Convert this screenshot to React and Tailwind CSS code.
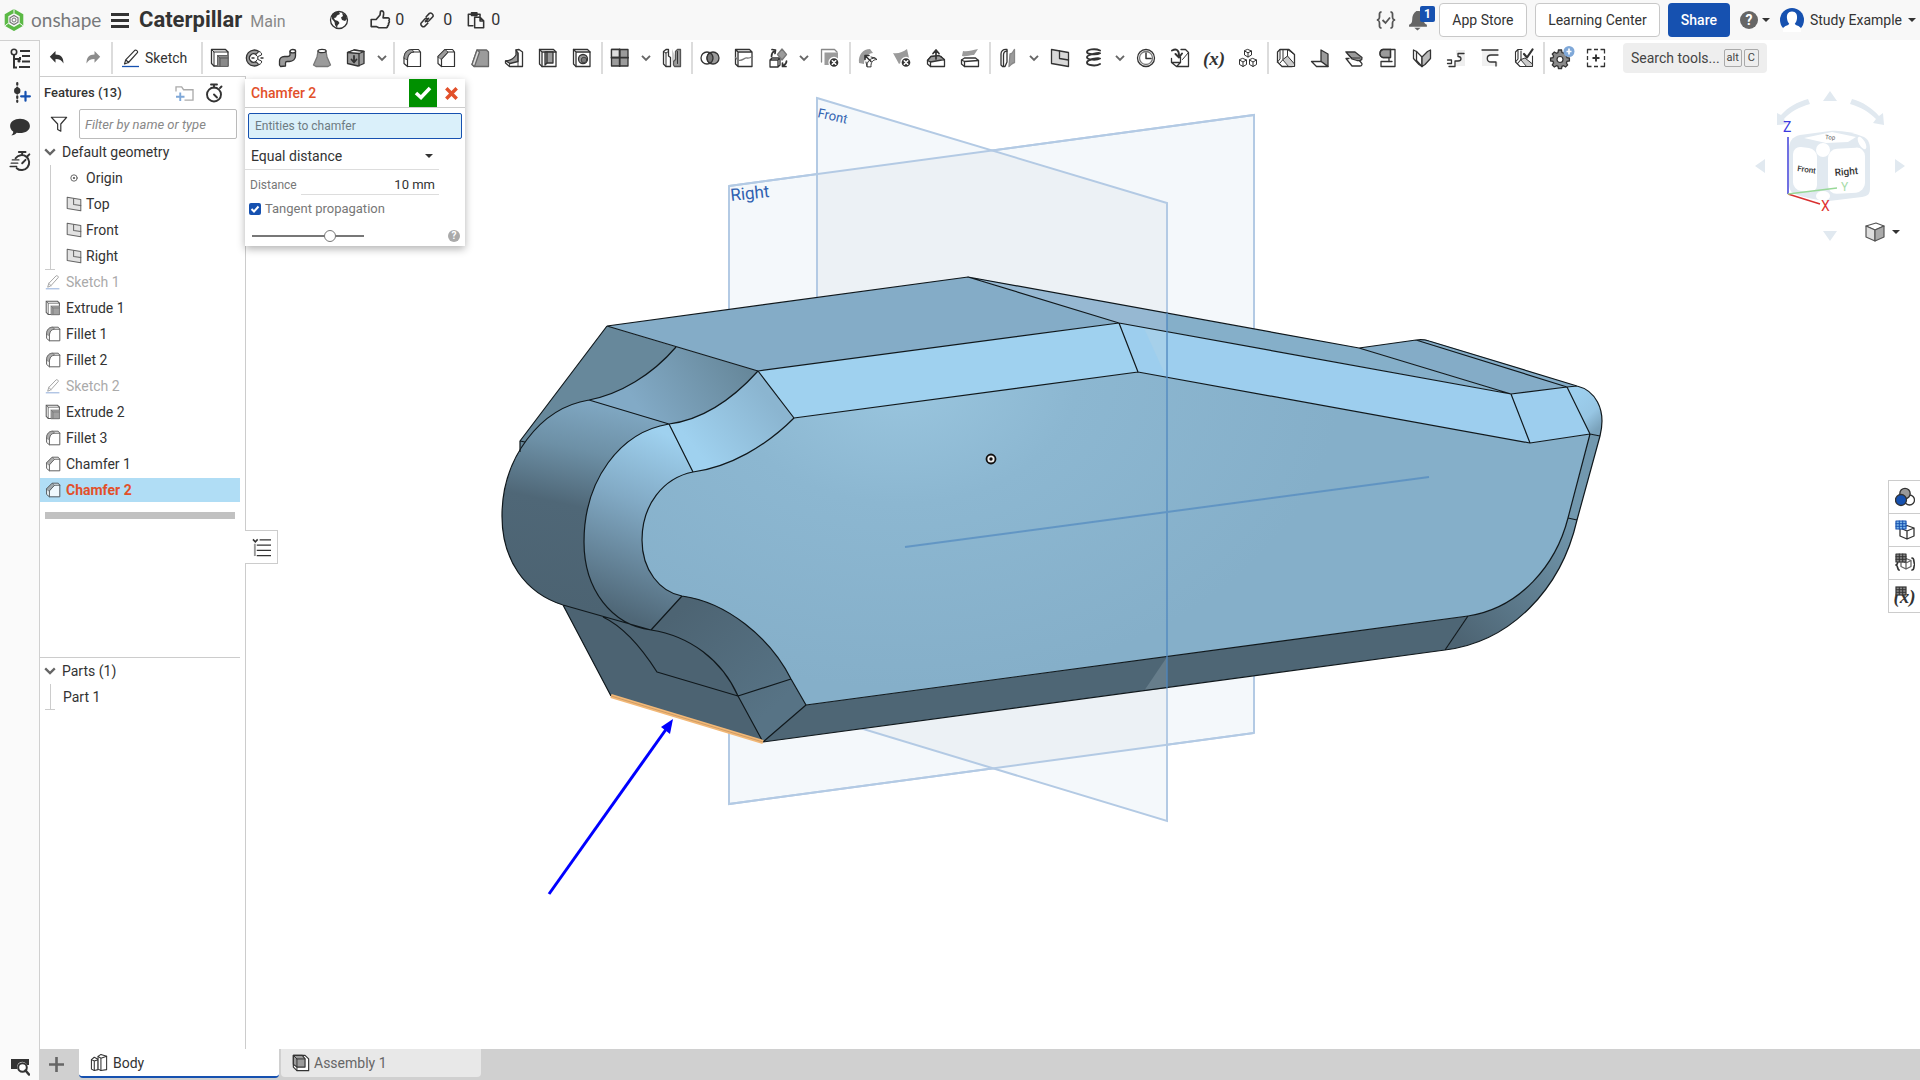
import React from "react";

const K = "#333";
const G = "#9b9b9b";

function Ico({ children, className = "size-5" }) {
  return (
    <svg viewBox="0 0 20 20" className={className} fill="none" stroke={K} strokeWidth="1.3" strokeLinejoin="round" strokeLinecap="round" aria-hidden="true">
      {children}
    </svg>
  );
}

const icons = {
  undo: <path d="M7.5 3v3.5c5.5 0 8 3 8 9-1.700-3.300-4-4.500-8-4.500v3.700L1.800 8.800z" fill={K} stroke="none" />,
  redo: <path d="M12.500 3v3.500c-5.500 0-8 3-8 9 1.700-3.300 4-4.500 8-4.500v3.700l5.700-5.900z" fill="#8c8c8c" stroke="none" />,
  sketch: (
    <>
      <path d="M3.500 16l1.200-4.200L14 2.200c1.200-.6 3 .9 2.600 2.200L7.500 14.500zM4.700 11.800l2.800 2.700" strokeWidth="1.200" />
      <path d="M1 18.500h17" stroke="#1651b0" strokeLinecap="butt" />
    </>
  ),
  extrude: (
    <>
      <path d="M4 18L1.500 15.500v-14h14L18 4v14z" fill="#fff" />
      <path d="M1.500 1.500L4 4v14M4 4h14" strokeWidth="1" />
      <path d="M7.500 18V7.500H18V18z" fill="#8a8a8a" stroke="#666" strokeWidth="1" />
      <path d="M7.500 7.500L10 10v8M10 10h8" stroke="#555" strokeWidth="1" />
    </>
  ),
  revolve: (
    <>
      <path d="M15 3.500A8 8 0 1 0 15 16.500L12 13.500A4.200 4.200 0 1 1 12 6.500z" fill={G} />
      <path d="M12 6.500l3-3c2 .5 3 2 2.500 3.500L14 8.500zM12 13.500l3 3c2-.5 3-2 2.500-3.500L14 11.500z" fill="#fff" strokeWidth="1" />
      <path d="M7.500 10h3M13 10h1.500M16.500 10h3" strokeLinecap="butt" />
    </>
  ),
  sweep: (
    <>
      <path d="M12 3.500v3.200c0 1.300-1 1.800-2.500 1.800H6.500C3 8.500 1.500 11 1.500 13v4l1 1.500 5-.5v-3c0-1 .5-1.500 1.500-1.500h2.500c3.500 0 6-2.500 6-5.500V3.500" fill={G} />
      <ellipse cx="14.800" cy="3.200" rx="2.800" ry="1.700" fill="#fff" />
    </>
  ),
  loft: (
    <>
      <path d="M6 3l-1 6-3.500 8L4 18.500h12l2.500-1.500L15 9l-1-6z" fill={G} stroke="#777" />
      <ellipse cx="10" cy="3" rx="4" ry="1.600" fill="#fff" />
    </>
  ),
  thicken: (
    <>
      <path d="M1.500 4.500L8 2l10 1.500v12L12 18 1.500 15.500z" fill={G} />
      <path d="M1.500 4.500L8 2l10 1.500-5 2z" fill="#fff" />
      <path d="M13 5.500V18" />
      <path d="M8 8v6M5.500 11.500L8 14.500l2.500-3" strokeWidth="1.800" />
    </>
  ),
  fillet: (
    <>
      <path d="M5.500 18.500L2 15.500V10c0-5 3-8.500 8-8.500h6.500l2 2.500v14.500h-13v-7C5.500 7 8 4 12 4h6.500" fill="#fff" strokeWidth="1.200" />
      <path d="M2 10c0-5 3-8.500 8-8.500L12 4C8 4 5.500 7 5.500 11.500z" fill={G} strokeWidth=".8" />
    </>
  ),
  chamfer: (
    <>
      <path d="M5.500 18.500L2 15.500V8.500l7-7h7.500l2 2.500v14.500h-13V11L12 4h6.500" fill="#fff" strokeWidth="1.200" />
      <path d="M2 8.500l7-7L12 4l-6.500 7z" fill={G} strokeWidth=".8" />
    </>
  ),
  draft: (
    <>
      <path d="M2 16.500L7 2h9.500l2 2v14.500H4z" fill={G} stroke="#666" />
      <path d="M2 16.500L7 2l2.500 2L4.500 18.500z" fill="#ddd" stroke="#666" />
    </>
  ),
  rib: (
    <>
      <path d="M12 2l3-.5L18.500 4v14.500H5.500L1.500 15v-2h4" fill="#fff" />
      <path d="M12 2v5C10 10 7 12.500 2 13l4 2.500 8-2V5z" fill={G} />
      <path d="M14 5v13.500M5.500 15.500v3" strokeWidth=".9" />
    </>
  ),
  shell: (
    <>
      <path d="M1.500 1.500h14L18 4v14.500H4L1.500 16z" fill="#fff" />
      <path d="M1.500 1.500L4 4v14.500M4 4h14" />
      <path d="M7 4h8v11H9L7 17z" fill={G} />
      <path d="M9 4v11" />
    </>
  ),
  hole: (
    <>
      <path d="M1.500 1.500h14L18 4v14.500H4L1.500 16z" fill="#fff" />
      <path d="M1.500 1.500L4 4v14.500M4 4h14" />
      <circle cx="11" cy="11" r="4.500" fill={G} />
      <circle cx="12" cy="12" r="2.800" fill="#777" strokeWidth=".8" />
    </>
  ),
  pattern: (
    <>
      <path d="M1.500 1.500H18v16.500H1.500z" fill={G} />
      <path d="M1.500 1.500h8v8h-8z" fill="#ddd" />
      <path d="M9.700 1.500V18M1.500 9.700H18" strokeWidth="1.800" />
    </>
  ),
  mirror: (
    <>
      <path d="M1.500 3.500v12.500L4 18.500h4.500v-9L6.500 8V1.500H4z" fill="#fff" />
      <path d="M4 18.500V5L1.500 3.500M4 5l2.500-1.500" strokeWidth="1" />
      <path d="M10 1l2.500 6v10.500L10 12z" fill="#ccc" stroke="none" />
      <path d="M18.500 1.500v17h-6l-1-1.500v-3.500l2-2V3.500l2-2z" fill={G} stroke="#555" />
      <path d="M15.500 3.500v12" strokeWidth="1" />
    </>
  ),
  boolean: (
    <>
      <circle cx="7" cy="10" r="6" fill="#fff" />
      <circle cx="13" cy="10" r="6" fill={G} />
      <path d="M10 4.800a6 6 0 0 1 0 10.400 6 6 0 0 1 0-10.400z" fill="#777" />
    </>
  ),
  split: (
    <>
      <path d="M1.500 1.500h14L18 4v14.500H4L1.500 16zM1.500 1.500L4 4v14.500M4 4h14" />
      <path d="M1.500 9.500L4 12c4 2 6-2.500 9-2 2 .5 3 0 5.500-1.500" stroke="#777" />
    </>
  ),
  transform: (
    <>
      <path d="M2 12l2-2h8v7l-2 2H2zM2 12h8v7M10 12l2-2" fill="#fff" />
      <path d="M14 1l4.500 5.500L14 12 9.500 6.500z" fill={G} stroke="#777" />
      <path d="M3.500 8.500C3.500 5 4.500 4 6.500 3M4 1.500l3.500.5L7 5.500M18.500 13c0 2-1 3.500-3 4.500M14.500 15v3.500H18" strokeWidth="1.700" />
    </>
  ),
  deletePart: (
    <>
      <path d="M1.500 14V1.500h13L17 4" stroke="#888" />
      <path d="M4.500 17V4.500H18V17z" fill={G} stroke="none" />
      <circle cx="14" cy="14.500" r="5" fill={K} stroke="#fff" />
      <path d="M12.300 12.800l3.400 3.400M15.700 12.800l-3.400 3.400" stroke="#fff" strokeWidth="1.600" />
    </>
  ),
  modifyFillet: (
    <>
      <path d="M1 15C0 7 5 1 12 1l3 4c-4 0-9 4-9 11z" fill={G} stroke="none" />
      <path d="M9 18.500c-.5-4.500 3-8.500 8-8.500l2 1.500c-4 0-6.500 3-6 7zM13 9l4 1M8 14l1 4.500" fill="#fff" strokeWidth="1" />
      <path d="M13 13.500L7 7.500M7 7.500h4M7 7.500v4" strokeWidth="1.600" />
    </>
  ),
  deleteFace: (
    <>
      <path d="M1 5c5 1 10-1 14-4l2 9c-4 2-7 4-10 6z" fill={G} stroke="none" />
      <circle cx="14" cy="14.500" r="5" fill={K} stroke="#fff" />
      <path d="M12.300 12.800l3.400 3.400M15.700 12.800l-3.400 3.400" stroke="#fff" strokeWidth="1.600" />
    </>
  ),
  moveFace: (
    <>
      <path d="M1.500 12.500l3.500-4h10l3.500 4v6h-14L1.500 16z" fill="#fff" />
      <path d="M1.500 12.500l3.500-4 8-1 5.500 4-14 2.500z" fill={G} />
      <path d="M4.500 14v4.500" />
      <path d="M10 11V3M7 5.500l3-3.500 3 3.500" strokeWidth="1.700" />
    </>
  ),
  replaceFace: (
    <>
      <path d="M3 3c5 1 9-1 15-2l-4 6c-4-.5-7 2-12 1z" fill={G} stroke="none" />
      <path d="M1.500 12l3-2h11l3 2.500v6h-14L1.500 16z" fill="#fff" />
      <path d="M1.500 12l3 1.500v5M4.500 13.500l14-1" />
    </>
  ),
  offsetSurface: (
    <>
      <path d="M3 17V6c0-3 2-5 6-4.500v12.500L7 18.500H4.500z" fill="#fff" />
      <path d="M5.500 18V7c0-2 1-4 3.500-4" />
      <path d="M12 6c3 0 3-3 4.500-4.500v13C14 15 13 17 11 18.500z" fill={G} stroke="#888" />
    </>
  ),
  plane: (
    <>
      <path d="M1.500 1.500l17 3v14l-17-3z" fill="#d9d9d9" />
      <path d="M9.500 3v7.500l9 1.500" />
    </>
  ),
  helix: (
    <path d="M16 2.500C11 0 3 1.500 3 4s10 3 13 1.200C15 4.500 3 6.500 3 9.300s10 3 13 1.200c-2-1-13 1-13 4s9 4 13 1.500" strokeWidth="1.900" />
  ),
  curve: (
    <>
      <circle cx="10" cy="10" r="8.500" fill="#fff" />
      <circle cx="10" cy="10" r="6.500" stroke="#777" />
      <path d="M10 5v5.500h5" strokeWidth="1.500" />
    </>
  ),
  derived: (
    <>
      <path d="M11 1.500h4.500l3 3v14h-12l-5-4v-4M1.500 14.500h9V9M10.500 14.500L7 18" />
      <path d="M18.500 4.500l-6 7" strokeWidth="1" />
      <path d="M2 2.500c4-2 7-1 7 5M5.500 6L9 9.500 12 5.500" strokeWidth="1.900" />
    </>
  ),
  cubes: (
    <path d="M10 1.500L13.500 3v4L10 9 6.500 7V3zM6.500 3L10 4.800 13.500 3M10 4.800V9M5 10.500L8.500 12v4.500L5 18.500l-3.500-2V12zM1.500 12L5 14l3.500-2M5 14v4.500M15 10.500l3.500 1.500v4.500l-3.500 2-3.500-2V12zM11.500 12l3.500 2 3.500-2M15 14v4.500" strokeWidth="1" />
  ),
  sm1: (
    <>
      <path d="M1.500 4L4 1.500h9l5.500 5V18l-3 .5H6L1.500 14z" fill="#fff" />
      <path d="M4 1.500v9.500L1.500 14M7 1.500v10L4 15M11.500 1.500V8M11.500 1.500l7 5" strokeWidth="1" />
      <path d="M7 11.500L11.500 8l7 8v2.500H13z" fill="#ccc" strokeWidth="1" />
    </>
  ),
  sm2: (
    <>
      <path d="M11 2l7 4v12.500l-7-5z" fill={G} />
      <path d="M11 13.500H1.500l5 5H18z" fill="#fff" />
    </>
  ),
  sm3: (
    <>
      <path d="M5 10.500H2l6 7.500h8c2 0 2.500-2 1.500-3L14 11" fill="#fff" />
      <path d="M2 4h9l7 5.500c.5 3-3 3.500-5 3l-5-1.500z" fill={G} />
      <path d="M2 4l6 6h8" strokeWidth="1" />
    </>
  ),
  sm4: (
    <>
      <path d="M5 1.500h12v17H3v-5h8v-4H5c-4-1-4-7 0-8z" fill="#fff" />
      <path d="M5 1.500h7.500v8H5c-4-1-4-7 0-8z" fill={G} />
      <path d="M12.500 1.500v8M11 13.500h3" />
    </>
  ),
  sm5: (
    <>
      <path d="M1.500 2l3 1.500L10 9v9.500l-3-2-5.500-6z" fill="#fff" />
      <path d="M18.500 2l-3 1.500L10 9v9.500l3-2 5.500-6z" fill="#bbb" />
      <path d="M4.500 3.500v9L10 18.500" />
    </>
  ),
  sm6: (
    <>
      <path d="M10 2v5c4-1 4 6 0 5v6h9V2z" fill="#eee" stroke="none" />
      <path d="M18 5.500h-6v3c4 0 4 4.500 0 4.500H9v5.500H3M1.500 12h4v3.500h-4" />
    </>
  ),
  sm7: (
    <>
      <path d="M2 2h16v6h-6c-4 0-4 6 0 6h6v4H2z" fill="#f0f0f0" stroke="none" />
      <path d="M2 2h16M18 7h-7c-5 0-5 7 0 7h5v4" />
    </>
  ),
  sm8: (
    <>
      <path d="M1.500 4L4 1.500h4M18.500 8v10l-3 .5H6L1.500 14V4M4 1.500v9.500L1.500 14M7 3v8.500L4 15" strokeWidth="1.100" />
      <path d="M7 11.500l4-1.500 7.500 6v2.500H13z" fill="#ccc" strokeWidth="1" />
      <path d="M10 6l3 3.500 5.500-8" strokeWidth="2.200" />
    </>
  ),
  addTool: (
    <>
      <path d="M1.500 5.500v-4h4M8 1.500h4M14.500 1.500h4v4M18.500 8v4M18.500 14.500v4h-4M12 18.500H8M5.500 18.500h-4v-4M1.500 12V8" strokeLinecap="butt" />
      <path d="M10 6.500v7M6.500 10h7" strokeWidth="1.900" strokeLinecap="butt" />
    </>
  ),
  assembly: (
    <>
      <path d="M1.500 1.500h13l4 4v13h-13l-4-4z" fill="#fff" />
      <path d="M1.500 1.500h10l3 4v9h-9l-4-3z" fill={G} />
      <path d="M1.500 1.500l4 4v13M5.500 5.500h9" strokeWidth="1.100" />
    </>
  ),
  part: (
    <>
      <path d="M1.500 7l3-2.500 4 2v11l-4 1-3-1.500z" fill="#fff" strokeWidth="1.100" />
      <path d="M1.500 7l3 1.500v10M4.500 8.500l4-1.500" strokeWidth="1.100" />
      <path d="M8.500 17V3.500l3-2 6 2v14l-6 1z" fill="#fff" strokeWidth="1.100" />
      <path d="M11.500 18.500V5.500l6-2M11.500 5.500l-3-2" strokeWidth="1.100" />
    </>
  ),
  stopwatch: (
    <>
      <circle cx="10" cy="11.500" r="7" strokeWidth="1.900" />
      <path d="M10 4.500V2M7 1.500h6M16 5l1.500-1.500M10 11.500l3 3" strokeWidth="1.900" />
    </>
  ),
};

function Fx() {
  return <span className="font-[Liberation_Serif,serif] text-[19px] leading-none font-bold italic text-[#333]">(x)</span>;
}

function Gear() {
  return (
    <svg viewBox="0 0 26 24" className="h-6 w-[26px]" aria-hidden="true">
      <path d="M9.500 5h3l.5 2.500 1.500.6L16.700 7l1.900 2-1.200 2 .6 1.600 2.400.5v2.800l-2.400.5-.6 1.600 1.200 2-2 2-2.100-1.300-1.500.6-.5 2.400h-3L9 21.300l-1.500-.6L5.300 22l-2-2 1.300-2.100-.6-1.500-2.400-.5v-2.800l2.400-.5.6-1.600L3.300 9l2-2 2.200 1.200L9 7.500z" transform="translate(0 -1)" fill="#8a8a8a" stroke="#333" strokeWidth="1.300" />
      <circle cx="11" cy="13.500" r="3" fill="#fff" stroke="#333" strokeWidth="1.200" />
      <circle cx="20" cy="5.500" r="5.500" fill="#7fa8d8" />
      <path d="M20 2.500v6M17.500 5.500h5" stroke="#fff" strokeWidth="1.700" />
    </svg>
  );
}

function Chevron({ className = "w-2.5 h-2" }) {
  return (
    <svg viewBox="0 0 10 8" className={className} fill="none" stroke="#666" strokeWidth="1.900" aria-hidden="true">
      <path d="M1 1.800l4 4 4-4" />
    </svg>
  );
}

function Caret({ className = "" }) {
  return (
    <svg viewBox="0 0 8 4" className={"h-1 w-2 shrink-0 " + className} aria-hidden="true">
      <path d="M0 0h8L4 4z" fill="#333" />
    </svg>
  );
}

const tools = [
  "extrude", "revolve", "sweep", "loft", "thicken", "v", "|",
  "fillet", "chamfer", "draft", "rib", "shell", "hole", "|",
  "pattern", "v", "mirror", "|",
  "boolean", "split", "transform", "v", "deletePart", "|",
  "modifyFillet", "deleteFace", "moveFace", "replaceFace", "|",
  "offsetSurface", "v", "plane", "helix", "v", "curve", "derived", "fx", "cubes", "|",
  "sm1", "sm2", "sm3", "sm4", "sm5", "sm6", "sm7", "sm8", "|",
  "gear", "addTool",
];

function Sep() {
  return <div className="h-8 w-1 shrink-0 border-r-2 border-[#dcdcdc]" />;
}

function Toolbar() {
  return (
    <div className="flex h-9 items-center bg-white">
      <div className="flex h-9 w-10 shrink-0 items-center justify-center border-t border-r border-[#d0d0d0] bg-[#fafafa]">
        <svg viewBox="0 0 22 22" className="size-[22px]" fill="none" stroke={K} strokeWidth="2" aria-hidden="true">
          <circle cx="5" cy="4" r="2.700" strokeWidth="1.600" />
          <path d="M5 6.500v13h3M5 11h6V9" />
          <circle cx="10" cy="13" r="1.600" fill={K} stroke="none" />
          <path d="M11 3h10M13 8h8M13 13.500h8M10 19h11" />
        </svg>
      </div>
      <button aria-label="Undo" className="flex h-8 w-[35px] items-center justify-center"><Ico>{icons.undo}</Ico></button>
      <button aria-label="Redo" className="flex h-8 w-[34px] items-center justify-center"><Ico>{icons.redo}</Ico></button>
      <Sep />
      <button className="flex h-8 w-[86px] items-center gap-1 pl-2 text-sm"><Ico>{icons.sketch}</Ico>Sketch</button>
      <Sep />
      {tools.map((t, i) =>
        t === "|" ? <Sep key={i} /> :
        t === "v" ? <button key={i} aria-label="More" className="flex h-8 w-[18px] items-center justify-center"><Chevron /></button> :
        <button key={i} aria-label={t} className="flex h-8 w-[34px] items-center justify-center">
          {t === "fx" ? <Fx /> : t === "gear" ? <Gear /> : <Ico>{icons[t]}</Ico>}
        </button>
      )}
      <button className="ml-2.5 flex h-[30px] items-center gap-0.5 rounded bg-[#eeeeee] px-2 text-sm whitespace-nowrap text-[#444]">
        Search tools...
        <kbd className="ml-0.5 rounded-xs border border-[#aaa] px-0.5 font-[Roboto,sans-serif] text-[11px] leading-4">alt</kbd>
        <kbd className="rounded-xs border border-[#aaa] px-[3px] font-[Roboto,sans-serif] text-[11px] leading-4">C</kbd>
      </button>
    </div>
  );
}

function Header() {
  return (
    <header className="flex h-10 shrink-0 items-center bg-[#f8f8f8]">
      <svg viewBox="0 0 20 22" className="ml-1 h-[22px] w-5" fill="none" aria-hidden="true">
        <path d="M10 2l7.500 4.300v9.400L10 20l-7.500-4.300V6.300z" stroke="#5bb946" strokeWidth="3.600" />
        <path d="M10 0v4M0 17.500l4-3M20 17.500l-4-3" stroke="#f8f8f8" strokeWidth="1" />
        <path d="M10 6.500l4 2.300v4.400l-4 2.300-4-2.300V8.800z" stroke="#777" strokeWidth="1.200" />
        <circle cx="10" cy="11" r="2" stroke="#777" strokeWidth="1" />
      </svg>
      <span className="ml-[7px] w-[74px] font-[Lato,sans-serif] text-[19px] leading-6 text-[#77787a]">onshape</span>
      <button aria-label="Menu" className="ml-1.5 flex w-[18px] flex-col gap-[3px]">
        <span className="h-[3px] bg-[#333]" /><span className="h-[3px] bg-[#333]" /><span className="h-[3px] bg-[#333]" />
      </button>
      <h1 className="ml-2.5 text-[22px] leading-7 font-bold">Caterpillar</h1>
      <span className="mt-1 ml-2 w-9 text-base text-[#888]">Main</span>
      <svg viewBox="0 0 20 20" className="ml-[43px] size-5" aria-hidden="true">
        <circle cx="10" cy="10" r="8.500" fill="#fff" stroke={K} strokeWidth="1.300" />
        <path d="M3 4.500C5 2 8 1.500 10 2l1 2-3 1.500-1 2-2 .5 1 2 3 1 1.500 2-2 2.500-.5 2.500-2-3-.5-3L3 9zM13 3l4 2 1 4-2 2-3-1-1-2.500 2-1.500z" fill={K} />
      </svg>
      <button className="ml-5 flex items-center gap-1 text-base">
        <Ico className="size-[22px]"><path d="M2 9.500h4.500l3.500-4L10.500 2c2-.8 3 .5 2.800 2.500L12.800 8h4.500c1.500.5 1.500 2 .8 2.500.7.800.4 2-.4 2.400.4.800 0 2-.7 2.300.1 1-.6 1.800-1.700 1.800H9L6.500 16H2z" strokeWidth="1.500" /></Ico>0
      </button>
      <button className="ml-[15px] flex items-center gap-2 text-base">
        <Ico className="size-4"><path d="M8 12l4-4M9 6l4-4.300c2-1.500 5.500 1.500 4.500 4L12.500 11c-1 1-3 1-4 0M11 14l-4 4c-2 1.500-5.500-1-4.500-4L7 9c1-1 3-1 4 0" strokeWidth="1.900" /></Ico>0
      </button>
      <button className="ml-[15px] flex items-center gap-1.5 text-base">
        <Ico className="size-[18px]"><path d="M6.500 16.500H1.500V3.500h13V6M5 5V2h6v3zM8.500 7h6l4 4v7.500h-10zM14.500 7v4h4" strokeWidth="1.700" /></Ico>0
      </button>

      <div className="ml-auto flex items-center">
        <svg viewBox="0 0 20 20" className="size-5" fill="none" stroke="#555" strokeWidth="1.800" aria-hidden="true">
          <path d="M5.500 2C3 2 3.500 4 3.500 6.500S3 9.500 1 10c2 .5 2.500 1 2.500 3.500S3 18 5.500 18M14.500 2c2.500 0 2 2 2 4.500s.5 3 2.500 3.500c-2 .5-2.500 1-2.500 3.500s.5 4.500-2 4.500M6.500 10l3 3 4.500-5.500" />
        </svg>
        <div className="relative ml-3 h-9 w-7">
          <svg viewBox="0 0 20 20" className="mt-2 size-[21px]" aria-hidden="true"><path d="M8 1h3c3 2 4 5 4 8s1 4 3 5v2H1v-2c2-1 3-2 3-5s1-6 4-8zM6 17h6l-3 2.500z" fill="#666" /></svg>
          <span className="absolute top-1 left-3 flex h-4 w-[15px] items-center justify-center rounded-xs bg-[#1651b0] text-xs font-bold text-white">1</span>
        </div>
        <button className="ml-[3px] h-[34px] w-[88px] rounded border border-[#c8c8c8] bg-white text-sm">App Store</button>
        <button className="ml-2 h-[34px] w-[125px] rounded border border-[#c8c8c8] bg-white text-sm">Learning Center</button>
        <button className="ml-2 h-[34px] w-[62px] rounded bg-[#1651b0] text-sm font-medium text-white">Share</button>
        <button aria-label="Help" className="ml-2.5 flex items-center gap-1">
          <span className="flex size-[18px] items-center justify-center rounded-full bg-[#666] text-sm font-bold text-white">?</span><Caret />
        </button>
        <button className="ml-2.5 flex items-center gap-1.5 pr-1 text-sm">
          <svg viewBox="0 0 24 24" className="size-6" aria-hidden="true">
            <circle cx="12" cy="12" r="12" fill="#1651b0" />
            <path d="M12 3.500c4 0 5.500 3 5 7-.3 2.500-1.200 4.200-2.200 5.200 1 2 5.200 2 6.200 4.800V24H3v-3.500c1-2.800 5.200-2.800 6.200-4.800-1-1-1.900-2.700-2.200-5.200-.5-4 1-7 5-7z" fill="#fff" />
          </svg>
          <span className="whitespace-nowrap">Study Example</span><Caret />
        </button>
      </div>
    </header>
  );
}

function TreeItem({ icon, label, faded, selected }) {
  return (
    <li className={"mb-0.5 flex h-6 items-center gap-[5px] pl-[5px] " + (selected ? "bg-[#b0ddf5] font-bold text-[#e2502a]" : faded ? "text-[#aaa]" : "")}>
      <span className={faded ? "opacity-45" : "opacity-80"}><Ico className="size-4">{icons[icon]}</Ico></span>{label}
    </li>
  );
}

const features = [
  ["sketch", "Sketch 1", true], ["extrude", "Extrude 1"], ["fillet", "Fillet 1"], ["fillet", "Fillet 2"],
  ["sketch", "Sketch 2", true], ["extrude", "Extrude 2"], ["fillet", "Fillet 3"], ["chamfer", "Chamfer 1"],
];

function FeaturePanel() {
  return (
    <aside className="flex w-[206px] shrink-0 flex-col border-t border-r border-[#ccc] bg-white text-sm">
      <div className="flex h-8 items-center pl-1 text-[13px] font-medium">
        <span className="w-[90px]">Features (13)</span>
        <svg viewBox="0 0 20 18" className="ml-[41px] h-[17px] w-[19px]" fill="none" aria-hidden="true">
          <path d="M1 7V2h6l2 3h10v11h-9" stroke="#aaa" strokeWidth="1.400" />
          <path d="M5.500 8v9M1 12.500h9" stroke="#7fa8d8" strokeWidth="2" />
        </svg>
        <Ico className="ml-2.5 size-5">{icons.stopwatch}</Ico>
      </div>
      <div className="flex h-[30px] items-center">
        <Ico className="ml-2.5 size-[18px]"><path d="M1.500 2.500h17L12 10v8l-3.500-2v-6z" /></Ico>
        <input aria-label="Filter features" placeholder="Filter by name or type" className="ml-[11px] h-[30px] w-[158px] rounded-xs border border-[#bbb] px-[5px] text-[13px] italic placeholder:text-[#888]" />
      </div>
      <div className="flex h-[26px] items-center gap-1.5 pl-1"><Chevron className="w-3 h-2.5" /><span>Default geometry</span></div>
      <ul className="relative h-[105px]">
        {["Origin", "Top", "Front", "Right"].map((n) => (
          <li key={n} className="flex h-[26px] items-center gap-1 pl-[26px]">
            <Ico className="size-4">
              {n === "Origin" ? <><circle cx="10" cy="10" r="4" strokeWidth="1.100" stroke="#555" /><circle cx="10" cy="10" r="1.400" fill="#555" stroke="none" /></> : <g opacity=".75">{icons.plane}</g>}
            </Ico>{n}
          </li>
        ))}
        <li aria-hidden="true" className="absolute top-0 left-2.5 h-full border-l border-[#ccc]" />
        <li aria-hidden="true" className="absolute bottom-0 left-[5px] w-2.5 border-b border-[#ccc]" />
      </ul>
      <ul className="w-[200px]">
        {features.map(([i, l, f]) => <TreeItem key={l} icon={i} label={l} faded={f} />)}
        <TreeItem icon="chamfer" label="Chamfer 2" selected />
      </ul>
      <div className="mt-2 ml-[5px] h-[7px] w-[190px] shrink-0 bg-[#c1c1c1]" />
      <div className="mt-[138px] w-[200px] border-t border-[#ccc]">
        <div className="flex h-[26px] items-center gap-1.5 pl-1"><Chevron className="w-3 h-2.5" /><span>Parts (1)</span></div>
        <div className="relative flex h-[26px] items-center pl-[23px]">
          <div className="absolute top-0 left-2.5 h-full border-l border-[#ccc]" />
          <div className="absolute bottom-0 left-[5px] w-2.5 border-b border-[#ccc]" />
          Part 1
        </div>
      </div>
    </aside>
  );
}

function Dialog() {
  return (
    <form className="absolute top-[3px] left-[-1px] w-[220px] bg-white text-sm shadow-[0_3px_8px_rgba(0,0,0,0.3)]">
      <div className="flex h-[29px] items-center border-b border-[#ccc] pl-1.5">
        <span className="flex-1 font-medium text-[#e2502a]">Chamfer 2</span>
        <button type="button" aria-label="Accept" className="flex h-7 w-7 items-center justify-center bg-[#009000]">
          <svg viewBox="0 0 18 14" className="h-3.5 w-[18px]" fill="none" stroke="#fff" strokeWidth="3.600" aria-hidden="true"><path d="M2 7l5 4.500L16 2" /></svg>
        </button>
        <button type="button" aria-label="Cancel" className="flex h-7 w-7 items-center justify-center">
          <svg viewBox="0 0 12 12" className="size-[13px]" stroke="#e2502a" strokeWidth="3.200" aria-hidden="true"><path d="M1.200 1.200l9.600 9.600M10.800 1.200l-9.600 9.600" /></svg>
        </button>
      </div>
      <input aria-label="Entities to chamfer" placeholder="Entities to chamfer" className="mx-[3px] mt-[5px] block h-[26px] w-[214px] rounded-xs border border-[#1651b0] bg-[#daf0fa] px-1.5 text-xs placeholder:text-[#6d7b82]" />
      <div className="relative mt-1 mr-[26px] flex h-[27px] items-center border-b border-[#ddd]">
        <select aria-label="Chamfer type" className="h-full w-full appearance-none bg-transparent pl-1.5">
          <option>Equal distance</option>
        </select>
        <Caret className="pointer-events-none absolute right-[6px]" />
      </div>
      <div className="mr-[26px] flex h-[25px] items-center pl-[5px]">
        <label htmlFor="dist" className="w-[51px] pt-1 text-xs text-[#777]">Distance</label>
        <input id="dist" defaultValue="10 mm" className="h-full min-w-0 flex-1 border-b border-[#ddd] pt-1 pr-1 text-right text-[13px]" />
      </div>
      <label className="mt-[3px] flex h-[22px] items-center gap-1 pl-1 text-[13px] text-[#777]">
        <span className="relative flex size-3">
          <input type="checkbox" defaultChecked className="size-3 appearance-none rounded-xs bg-[#1651b0]" />
          <svg viewBox="0 0 12 12" className="pointer-events-none absolute inset-0 size-3" fill="none" stroke="#fff" strokeWidth="2" aria-hidden="true"><path d="M2.500 6l2.500 2.500 4.500-5" /></svg>
        </span>
        Tangent propagation
      </label>
      <div className="mt-1.5 flex h-5 items-center pl-[7px]">
        <input aria-label="Preview" type="range" defaultValue="72" className="h-3 w-28 appearance-none bg-transparent [&::-webkit-slider-runnable-track]:h-0.5 [&::-webkit-slider-runnable-track]:bg-[#777] [&::-webkit-slider-thumb]:-mt-[5px] [&::-webkit-slider-thumb]:size-3 [&::-webkit-slider-thumb]:appearance-none [&::-webkit-slider-thumb]:rounded-full [&::-webkit-slider-thumb]:border [&::-webkit-slider-thumb]:border-[#777] [&::-webkit-slider-thumb]:bg-white" />
        <button type="button" aria-label="Feature help" className="mr-[5px] ml-auto flex size-3 items-center justify-center rounded-full bg-[#aaa] text-[10px] font-bold text-white">?</button>
      </div>
    </form>
  );
}

const E = { fill: "none", stroke: "#10181c", strokeWidth: 1.2, strokeLinejoin: "round" };

function Scene() {
  return (
    <svg viewBox="246 76 1674 973" className="block h-full w-full" role="img" aria-label="Caterpillar part model">
      <defs>
        <linearGradient id="nose" x1="600" y1="400" x2="555" y2="605" gradientUnits="userSpaceOnUse">
          <stop offset="0" stopColor="#81a9c4" /><stop offset=".25" stopColor="#6d90a6" /><stop offset=".52" stopColor="#4f6777" /><stop offset="1" stopColor="#4c6372" />
        </linearGradient>
        <linearGradient id="noseCh" x1="680" y1="440" x2="610" y2="610" gradientUnits="userSpaceOnUse">
          <stop offset="0" stopColor="#9fd1ef" /><stop offset=".4" stopColor="#82aac5" /><stop offset="1" stopColor="#4f6777" />
        </linearGradient>
        <linearGradient id="neck" x1="640" y1="410" x2="735" y2="350" gradientUnits="userSpaceOnUse">
          <stop offset="0" stopColor="#82aac6" /><stop offset="1" stopColor="#67889b" />
        </linearGradient>
        <linearGradient id="neckCh" x1="700" y1="455" x2="770" y2="400" gradientUnits="userSpaceOnUse">
          <stop offset="0" stopColor="#9fd1ef" /><stop offset="1" stopColor="#8bb5d0" />
        </linearGradient>
        <linearGradient id="lowCh" x1="680" y1="610" x2="770" y2="710" gradientUnits="userSpaceOnUse">
          <stop offset="0" stopColor="#4d6473" /><stop offset="1" stopColor="#577385" />
        </linearGradient>
        <radialGradient id="side" cx="900" cy="380" r="440" gradientUnits="userSpaceOnUse" gradientTransform="translate(0 114) scale(1 .7)">
          <stop offset="0" stopColor="#9ac6df" /><stop offset=".4" stopColor="#8cb7d1" /><stop offset="1" stopColor="#85afc9" />
        </radialGradient>
        <linearGradient id="tail" x1="1575" y1="520" x2="1460" y2="640" gradientUnits="userSpaceOnUse">
          <stop offset="0" stopColor="#7298ae" /><stop offset="1" stopColor="#4d6473" />
        </linearGradient>
        <linearGradient id="tip" x1="1575" y1="395" x2="1602" y2="425" gradientUnits="userSpaceOnUse">
          <stop offset="0" stopColor="#9dcfee" /><stop offset=".6" stopColor="#97c6e4" /><stop offset="1" stopColor="#7aa2bb" />
        </linearGradient>
      </defs>

      <path d="M729 186L1254 115V733L729 804z" fill="#f4f8fb" stroke="#b3cae4" strokeWidth="2" />
      <path d="M817 98L1167 203V821L817 715z" fill="#f4f8fb" />
      <path d="M817 174L992 150 1167 203V745L992 768 817 715z" fill="#ecf1f5" />
      <path d="M817 98L1167 203V821L817 715z" fill="none" stroke="#b3cae4" strokeWidth="2" />
      <path d="M729 186L1254 115M729 804L1254 733" stroke="#b3cae4" strokeWidth="2" />
      <text transform="translate(817 117) rotate(13)" fontSize="13" fill="#2f61b0" fontFamily="Roboto, sans-serif">Front</text>
      <text transform="translate(731 201) rotate(-6)" fontSize="17" fill="#2f61b0" fontFamily="Roboto, sans-serif">Right</text>

      <path d="M607 326L520 441V452L563 605 611 696 763 742 760 372z" fill="#67889b" />
      <path d="M563 605L611 696 763 742 806 705 738 600 620 580z" fill="#4c6372" />
      <path d="M607 326L968 277 1119 323 758 371z" fill="#84acc7" />
      <path d="M968 277L1359 348 1511 394 1119 323z" fill="#85afc9" />
      <path d="M968 277L1167 313V332L1119 323z" fill="#96b8d2" />
      <path d="M1359 348L1416 340 1427 340 1577 386 1567 387 1511 394z" fill="#84acc7" />
      <path d="M758 371L1119 323 1138 372 794 418z" fill="#9fd1ef" />
      <path d="M1119 323L1511 394 1567 387 1590 434 1530 443 1138 372z" fill="#9dceee" />
      <path d="M1144 328L1167 332V377L1163 370z" fill="#a6d0ea" />
      <path d="M1567 387L1577 386C1594 390 1607 408 1600 436L1590 434z" fill="url(#tip)" />
      <path d="M1590 434L1600 436 1577 520 1568 518z" fill="#7298ae" />
      <path d="M1568 518L1577 520C1561 590 1510 642 1445 650L1468 616C1520 608 1556 565 1568 518z" fill="url(#tail)" />
      <path d="M763 742L806 705 1468 616 1445 650z" fill="#4e6675" />
      <path d="M1144 691L1167 657V688z" fill="#667d8b" />
      <path d="M794 418L1138 372 1530 443 1590 434 1568 518C1556 565 1520 608 1468 616L806 705 791 679C770 637 726 602 682 596C660 592 642 570 642 540C642 505 663 478 693 472C730 467 766 446 794 418z" fill="url(#side)" />
      <path d="M676 347L758 371C730 402 700 420 669 424L589 400C620 394 652 375 676 347z" fill="url(#neck)" />
      <path d="M758 371L794 418C766 446 730 467 693 472L669 424C700 420 730 402 758 371z" fill="url(#neckCh)" />
      <path d="M589 400L669 424C620 432 584 480 584 542C584 590 612 625 651 630L563 605C525 593 502 560 502 516C502 458 540 408 589 400z" fill="url(#nose)" />
      <path d="M669 424L693 472C663 478 642 505 642 540C642 570 660 592 682 596L651 630C612 625 584 590 584 542C584 480 620 432 669 424z" fill="url(#noseCh)" />
      <path d="M682 596C726 602 770 637 791 679L806 705 763 742 738 696C722 660 690 636 651 630z" fill="url(#lowCh)" />

      <path {...E} d="M607 326L968 277M607 326L520 441V452M607 326L758 371 1119 323 968 277 1359 348 1416 340Q1423 339 1429 341L1577 386M1359 348L1511 394 1119 323 1138 372 794 418 758 371M1416 340L1567 387M1511 394L1567 387 1577 386C1594 390 1607 408 1600 436L1577 520C1561 590 1510 642 1445 650L763 742 738 696M1138 372L1530 443 1590 434 1567 387M1511 394L1530 443M1590 434L1600 436M1590 434L1568 518C1556 565 1520 608 1468 616L806 705 763 742M1568 518L1577 520M1468 616L1445 650" />
      <path {...E} d="M676 347C652 375 620 394 589 400L669 424C700 420 730 402 758 371M794 418C766 446 730 467 693 472L669 424C620 432 584 480 584 542C584 590 612 625 651 630L563 605 611 696M589 400C540 408 502 458 502 516C502 560 525 593 563 605M693 472C663 478 642 505 642 540C642 570 660 592 682 596C726 602 770 637 791 679L806 705M682 596L651 630C690 636 722 660 738 696L791 679M603 617C624 627 643 650 657 672L738 696M520 441L525 442" />
      <path d="M611 696L763 742" stroke="#f2b877" strokeWidth="4" />
      <path d="M611 696L763 742" stroke="#cf9c64" strokeWidth="1" />
      <path d="M905 547L1429 477M1167 313V688" stroke="#4d86be" strokeOpacity=".65" strokeWidth="2" />
      <circle cx="991" cy="459" r="4.500" fill="#eee" stroke="#111" strokeWidth="1.800" /><circle cx="991" cy="459" r="1.700" fill="#111" />
      <path d="M549 894L667 728" stroke="#00f" strokeWidth="3" /><path d="M673 719L670 734 661 727z" fill="#00f" />

      <g fill="#e1e9f0">
        <path d="M1823 101l7-10 7 10zM1823 231l7 10 7-10zM1765 159v14l-10-7zM1895 159v14l10-7z" />
        <path d="M1808 99l2 5c-11 3-20 8-26 15l3 5-10 1v-12l4 2c7-8 16-13 27-16zM1852 99l-2 5c11 3 19 8 26 15l-3 4 11 2-1-12-4 3c-7-8-16-14-27-17z" />
        <path d="M1789 150c0-9 3-13 11-15l30-4c10-1 22 1 34 6 5 3 6 7 6 13v38c0 6-2 8-8 9l-33 4c-8 0-29-4-36-8-3-2-4-5-4-9z" />
      </g>
      <g fill="#fff">
        <rect x="1793" y="146" width="24" height="44" rx="8" transform="matrix(1 .12 0 1 0 -215)" />
        <rect x="1828" y="149" width="37" height="45" rx="9" transform="matrix(1 -.06 0 1 0 110)" />
        <path d="M1804 138l28-6 24 5-8 5-22 1z" /><circle cx="1823" cy="150" r="7" /><ellipse cx="1823" cy="196" rx="7" ry="5" /><ellipse cx="1862" cy="143" rx="3" ry="7" transform="rotate(-30 1862 143)" />
      </g>
      <path d="M1788 194V137" stroke="#4040d8" strokeWidth="1.500" /><path d="M1788 194L1820 204" stroke="#d83030" strokeWidth="1.500" /><path d="M1788 194L1837 188" stroke="#98d898" strokeWidth="1.500" />
      <g fontFamily="Roboto, sans-serif">
        <text x="1783" y="132" fontSize="14" fill="#3a3ae0">Z</text><text x="1821" y="211" fontSize="14" fill="#e03030">X</text><text x="1841" y="191" fontSize="12" fill="#a8dca8">Y</text>
        <text transform="translate(1797 171) rotate(8)" fontSize="8" fontWeight="500" fill="#333">Front</text>
        <text transform="translate(1835 176) rotate(-5)" fontSize="10" fontWeight="500" fill="#333">Right</text>
        <text transform="translate(1825 139) rotate(5)" fontSize="6" fill="#555">Top</text>
      </g>
      <g stroke="#555" strokeWidth="1.200" strokeLinejoin="round"><path d="M1866 226l10-3 8 3-9 4z" fill="#fff" /><path d="M1866 226l9 4v11l-9-4z" fill="#ddd" /><path d="M1884 226l-9 4v11l9-4z" fill="#aaa" /></g>
      <path d="M1892 230h8l-4 4z" fill="#333" />
    </svg>
  );
}

function Grid({ c = K, f = "#bbb" }) {
  return <><rect x="1" y="1" width="10" height="8" fill={f} stroke={c} strokeWidth="1.200" /><path d="M1 3.700h10M1 6.300h10M4.300 1v8M7.700 1v8" stroke={c} strokeWidth="1" /></>;
}

function RightTabs() {
  const cube = <path d="M12 5.500l7 2.500v8l-7 3-7-3V8zM5 8l7 3 7-3M12 11v8" strokeWidth="1.300" />;
  const list = [
    ["Appearance", <><circle cx="14.500" cy="13" r="5" fill="#fff" /><circle cx="10" cy="6.500" r="5.200" fill="#999" /><circle cx="6" cy="13" r="5.500" fill="#1651b0" /></>],
    ["Configurations", <>{cube}<Grid c="#1651b0" f="#7fb8e8" /></>],
    ["Custom tables", <><path d="M11 5.500l5 2v6l-5 2.500-5-2.500v-6zM6 7.500l5 2.500 5-2.500M11 10v6" stroke="#666" /><path d="M3 8c-1 3 0 3-2 4 2 0 1 4 3 5M17 5c3 0 1 5 3 6.500-2 1 0 5.500-3 5.500" strokeWidth="1.700" /><Grid f="#888" /></>],
    ["Variables", null],
  ];
  return (
    <div className="absolute top-[404px] right-0 flex w-8 flex-col border-t border-l border-[#ccc] bg-white">
      {list.map(([n, g]) => (
        <button key={n} aria-label={n} className="relative flex h-[33px] w-full items-center justify-center border-b border-[#ccc]">
          {g ? <Ico>{g}</Ico> : <><Fx /><svg viewBox="0 0 12 10" className="absolute top-1.5 left-1.5 h-2.5 w-3" aria-hidden="true"><Grid f="#888" /></svg></>}
        </button>
      ))}
    </div>
  );
}

export default function App() {
  return (
    <div className="flex h-screen flex-col overflow-hidden bg-white font-[Roboto,sans-serif] text-[#333]">
      <Header />
      <Toolbar />
      <div className="flex min-h-0 flex-1">
        <nav className="flex w-10 shrink-0 flex-col items-center gap-3 border-r border-[#d0d0d0] bg-[#fafafa] pt-1.5 pb-1">
          <button aria-label="Insert"><Ico className="size-[22px]"><path d="M7.500 1v17" strokeWidth="2" strokeDasharray="1.500 2.500" /><circle cx="7.500" cy="8" r="2.900" fill={K} stroke="none" /><path d="M15 9v8M11 13h8" stroke="#1651b0" strokeWidth="2" /></Ico></button>
          <button aria-label="Comments"><Ico className="size-[22px]"><path d="M10 2.500c5 0 9 2.700 9 6.500s-4 6.500-9 6.500c-1 0-2-.1-3-.3-1.500 1.800-3 2.300-5 2.300 1.500-1 2-2.200 1.800-3.500C2 12.800 1 11 1 9c0-3.800 4-6.500 9-6.500z" fill={K} stroke="none" /></Ico></button>
          <button aria-label="Versions"><Ico className="size-[22px]"><path d="M6 7.500A6.800 6.800 0 1 1 7 16.500M12 4.500V2M9 1.800h6M17 5.500l1.500-1.500M12 12l3-3" strokeWidth="1.800" /><path d="M3 9h6M2 12h6M1 15h6" strokeWidth="1.200" /></Ico></button>
          <button aria-label="Search tabs" className="mt-auto"><Ico className="size-5"><path d="M1 3h18v6h-2a5 5 0 0 0-9.500 4H1z" fill={K} stroke="none" /><circle cx="12.500" cy="11.500" r="4.300" strokeWidth="2" fill="#fff" /><path d="M15.500 14.500l3.500 4" strokeWidth="2.500" /></Ico></button>
        </nav>
        <div className="flex min-w-0 flex-1 flex-col">
          <div className="flex min-h-0 flex-1">
            <FeaturePanel />
            <main className="relative min-w-0 flex-1">
              <Scene />
              <Dialog />
              <button aria-label="Feature list" className="absolute top-[454px] left-[-1px] flex h-[34px] w-[33px] items-center justify-center border border-l-0 border-[#ccc] bg-white">
                <svg viewBox="0 0 20 20" className="size-[19px]" fill="none" stroke={K} strokeWidth="1.200" aria-hidden="true"><path d="M8 2h12M5 7.500h15M5 13h15M5 18.500h15" /><path d="M1 1.500L3.500 4 6 1.500" strokeWidth="1.700" /><path d="M3 6v13" stroke="#999" strokeWidth="2" /></svg>
              </button>
              <RightTabs />
            </main>
          </div>
          <footer className="flex h-[31px] shrink-0 items-start bg-[#d0d0d0] text-sm">
            <button aria-label="Add tab" className="flex h-[31px] w-[39px] items-center justify-center pr-1.5">
              <svg viewBox="0 0 16 16" className="size-[15px]" stroke="#666" strokeWidth="2.800" aria-hidden="true"><path d="M8 0v16M0 8h16" /></svg>
            </button>
            <button className="flex h-[29px] w-[200px] items-center gap-1 rounded-b border-b-2 border-[#1651b0] bg-white pl-[11px]"><Ico className="size-[19px]">{icons.part}</Ico>Body</button>
            <button className="ml-0.5 flex h-[28px] w-[200px] items-center gap-1 rounded-b bg-[#e8e8e8] pl-[11px] text-[#666]"><Ico className="size-[18px]">{icons.assembly}</Ico>Assembly 1</button>
          </footer>
        </div>
      </div>
    </div>
  );
}
